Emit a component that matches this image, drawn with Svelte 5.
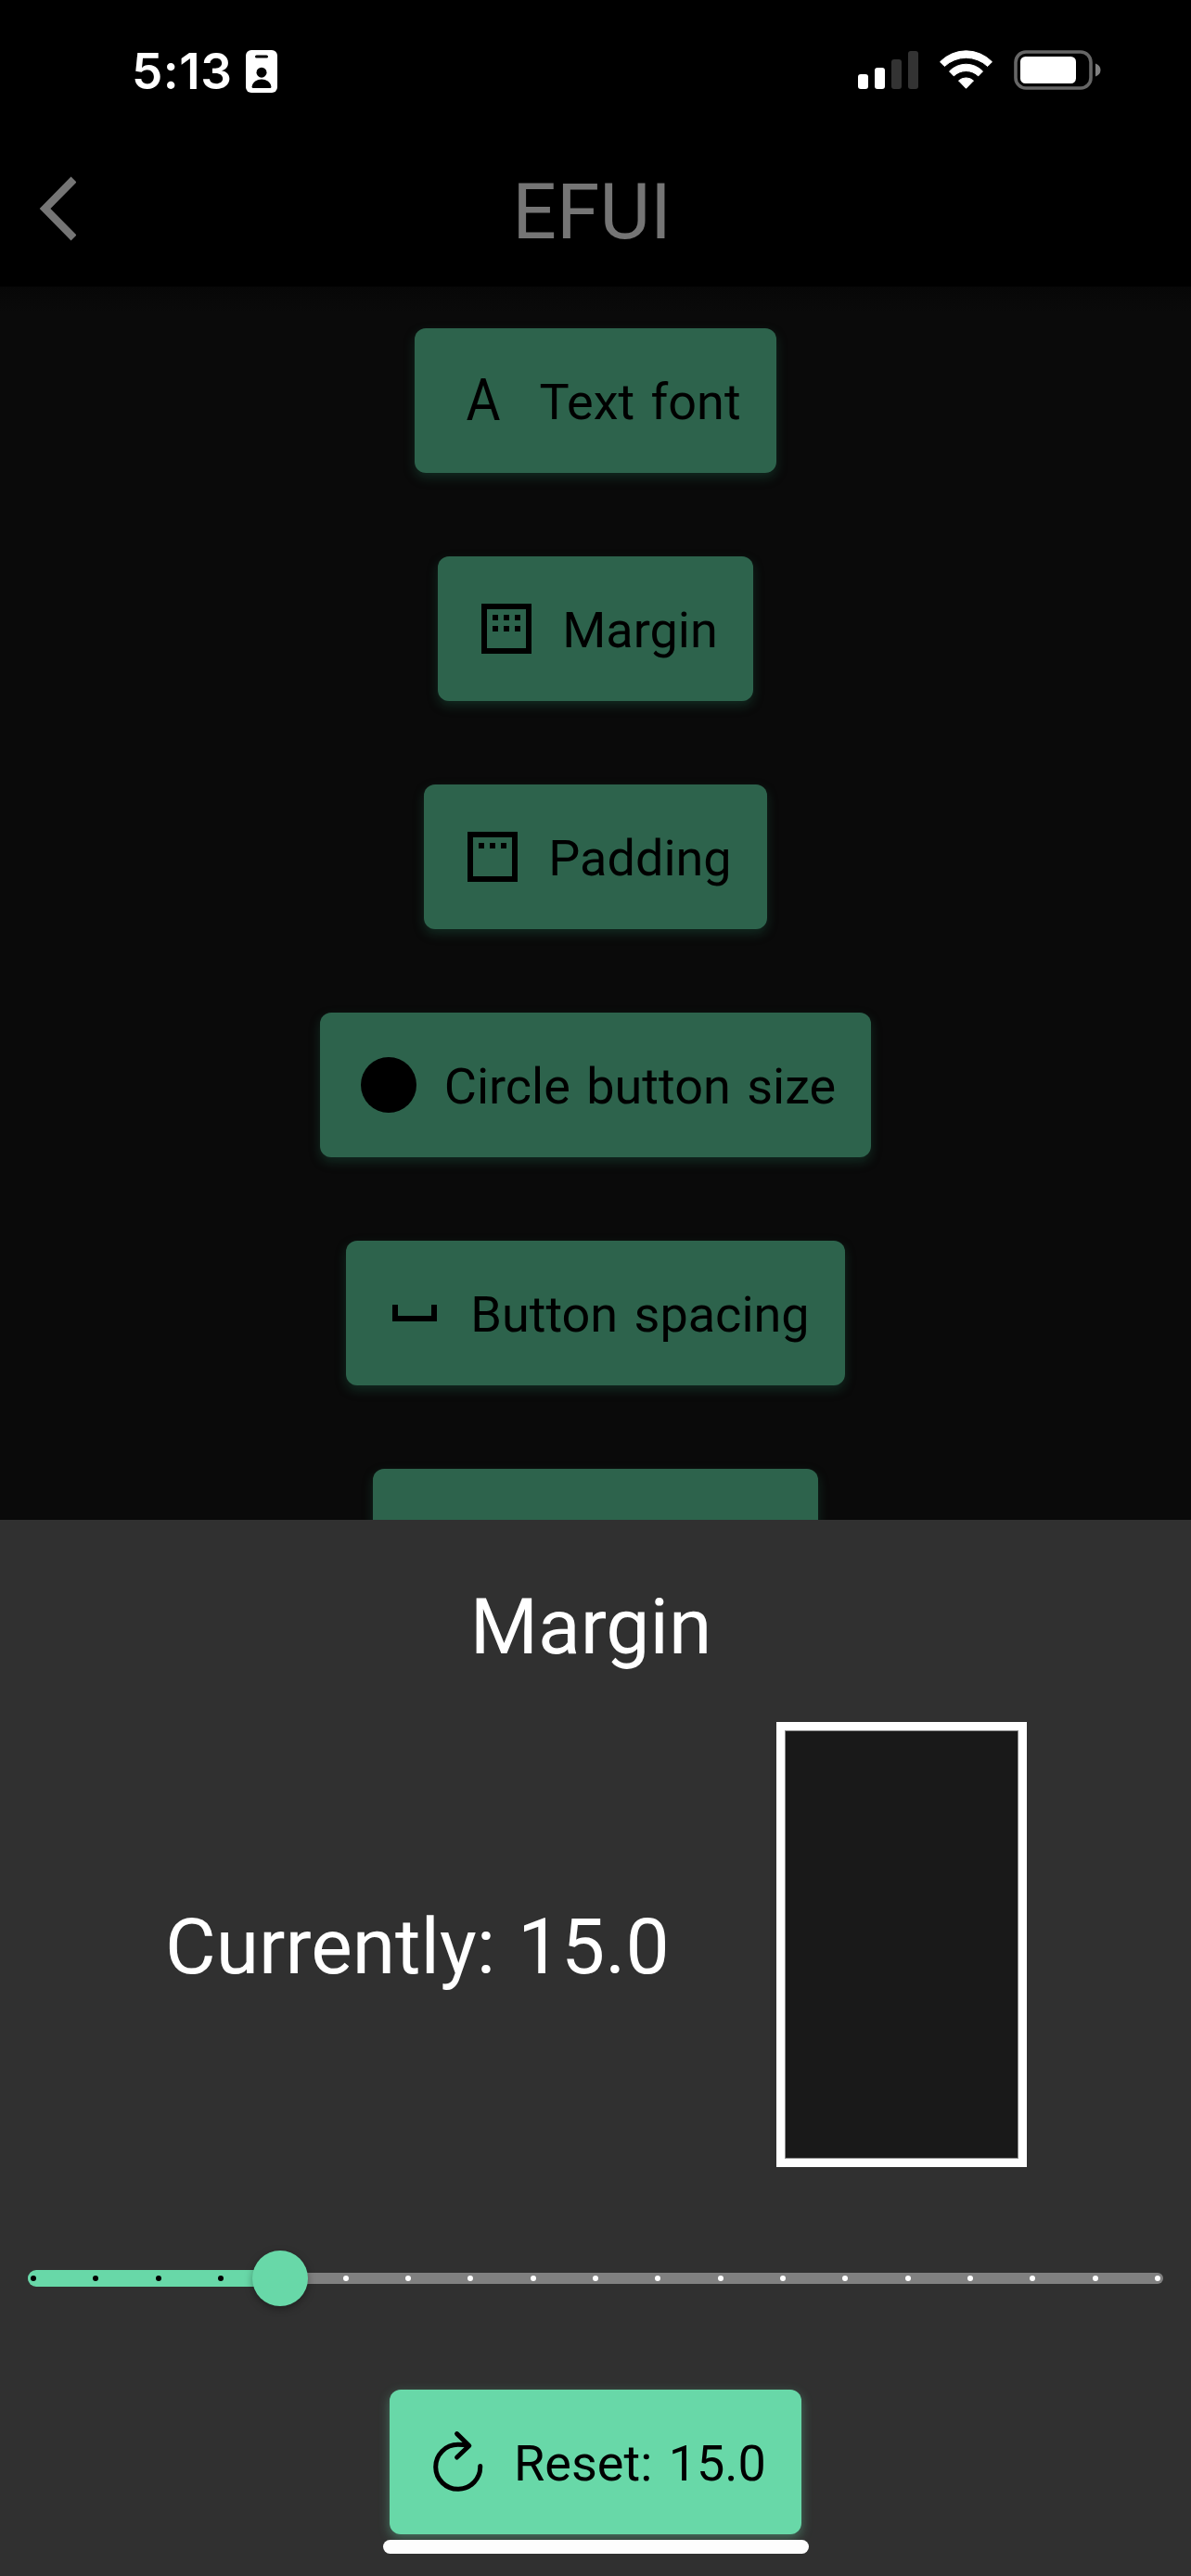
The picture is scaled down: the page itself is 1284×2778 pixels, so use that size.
<script>
  const settings = [
    { icon: 'font', label: 'Text font' },
    { icon: 'margin', label: 'Margin' },
    { icon: 'padding', label: 'Padding' },
    { icon: 'circle', label: 'Circle button size' },
    { icon: 'space', label: 'Button spacing' }
  ];
  const divisions = 18;
  const step = 4;
  const ticks = Array.from({ length: divisions + 1 }, (_, i) => i);
</script>

{#snippet glyph(name)}
  <svg class="glyph" viewBox="0 0 72 72" aria-hidden="true">
    {#if name === 'font'}
      <text class="letter" x="36" y="57" text-anchor="middle" textLength="37" lengthAdjust="spacingAndGlyphs">A</text>
    {:else if name === 'margin' || name === 'padding'}
      <rect x="12" y="12" width="48" height="48" fill="none" stroke="#000" stroke-width="6" />
      <path d="M21 21h6v6h-6zM33 21h6v6h-6zM45 21h6v6h-6z" />
      {#if name === 'margin'}
        <path d="M21 33h6v6h-6zM33 33h6v6h-6zM45 33h6v6h-6z" />
      {/if}
    {:else if name === 'circle'}
      <circle cx="36" cy="36" r="30" />
    {:else if name === 'space'}
      <path d="M12 27h6v12h36V27h6v18H12z" />
    {:else if name === 'reset'}
      <g fill="none" stroke="#000" stroke-width="5" stroke-linecap="round" stroke-linejoin="round">
        <path d="M59.700 40.400A24 24 0 1 1 35.700 17.300Q42 17.300 47 18.600" />
        <path d="M34.600 5.600L47.800 18.500L34.600 31" />
      </g>
    {/if}
  </svg>
{/snippet}

<div class="screen">
  <div class="status">
    <div class="clock">
      <span>5:13</span>
      <svg width="34" height="46" viewBox="0 0 34 46" aria-hidden="true">
        <rect width="34" height="46" rx="6" fill="#fff" />
        <rect x="10" y="5.4" width="14" height="3.2" rx="1.6" />
        <circle cx="17" cy="24.2" r="5.5" />
        <path d="M8 41Q6.4 41 6.6 39.4C7.4 34.500 12 31.600 17 31.600S26.600 34.500 27.400 39.400Q27.600 41 26 41z" />
      </svg>
    </div>
    <div class="signals">
      <svg width="65" height="42" viewBox="0 0 65 42" aria-hidden="true">
        <g fill="#fff">
          <rect y="26" width="11" height="16" rx="3" />
          <rect x="18" y="19" width="11" height="23" rx="3" />
        </g>
        <g fill="#333">
          <rect x="36" y="10" width="11" height="32" rx="3" />
          <rect x="54" y="1" width="11" height="41" rx="3" />
        </g>
      </svg>
      <svg width="57" height="42" viewBox="0 0 57 42" aria-hidden="true">
        <g fill="#fff" stroke="#fff" stroke-width="1" stroke-linejoin="round">
          <path d="M.5 12.700A39 39 0 0 1 56.500 12.700L51.700 17.500A34 34 0 0 0 5.300 17.500z" />
          <path d="M10.500 22.900A25 25 0 0 1 46.500 22.900L41.700 27.900A19 19 0 0 0 15.300 27.900z" />
          <path d="M20.500 33A12 12 0 0 1 36.500 33L28.500 41.300z" />
        </g>
      </svg>
      <svg width="94" height="43" viewBox="0 0 94 43" aria-hidden="true">
        <rect x="2" y="2" width="81" height="39" rx="11" fill="none" stroke="#666" stroke-width="3.600" />
        <rect x="7" y="7" width="60" height="29" rx="5.500" fill="#fff" />
        <path d="M88 14.500Q93.500 16.500 93.500 21.500T88 28.500z" fill="#808080" />
      </svg>
    </div>
  </div>

  <header class="bar">
    <svg class="back" width="40" height="70" viewBox="0 0 40 70" aria-hidden="true">
      <path d="M37.500 3.500L6.500 35L37.500 66.500" fill="none" stroke="#757575" stroke-width="8.300" />
    </svg>
    <h1>EFUI</h1>
  </header>

  <main class="list">
    {#each settings as item}
      <button class="btn dim">
        {@render glyph(item.icon)}
        <span>{item.label}</span>
      </button>
    {/each}
    <div class="btn dim next"></div>
  </main>

  <section class="sheet">
    <h2>Margin</h2>
    <div class="current">
      <p>Currently: 15.0</p>
      <div class="preview"></div>
    </div>
    <div class="slider">
      <div class="track"></div>
      <div class="active"></div>
      <div class="ticks">
        {#each ticks as t}
          <i class:on={t < step}></i>
        {/each}
      </div>
      <div class="thumb"></div>
    </div>
    <button class="btn bright">
      {@render glyph('reset')}
      <span>Reset: 15.0</span>
    </button>
    <div class="home"></div>
  </section>
</div>

<style>
  :global(body) {
    background: #000;
  }
  .screen {
    width: 1284px;
    height: 2778px;
    overflow: hidden;
    display: flex;
    flex-direction: column;
    background: #0a0a0a;
    font-family: Roboto, sans-serif;
    font-weight: 400;
  }
  h1, h2, p {
    margin: 0;
    font-size: 84px;
    font-weight: 400;
    line-height: 98px;
    word-spacing: 3px;
    white-space: nowrap;
  }
  p {
    padding-top: 6px;
  }
  .status {
    flex: none;
    height: 141px;
    box-sizing: border-box;
    padding: 54px 97px 0 142px;
    display: flex;
    justify-content: space-between;
    align-items: flex-start;
    background: #000;
  }
  .clock {
    display: flex;
    gap: 15px;
    color: #fff;
    font: 600 53px/46px Inter, sans-serif;
    letter-spacing: 0.5px;
  }
  .clock span {
    width: 108px;
    white-space: nowrap;
  }
  .signals {
    display: flex;
    gap: 23px;
  }
  .bar {
    flex: none;
    height: 168px;
    display: grid;
    grid-template-columns: 42px 40px 1fr 82px;
    align-items: center;
    background: #000;
    color: #757575;
  }
  .back {
    grid-column: 2;
  }
  h1 {
    padding-top: 8px;
    text-align: center;
    text-indent: -8px;
  }
  .list {
    flex: none;
    height: 1330px;
    box-sizing: border-box;
    padding-top: 45px;
    overflow: hidden;
    display: flex;
    flex-direction: column;
    align-items: center;
    gap: 90px;
    background: linear-gradient(#070707, #0a0a0a 28px);
  }
  .btn {
    flex: none;
    height: 156px;
    padding: 0 38px;
    border: 0;
    border-radius: 12px;
    display: flex;
    align-items: center;
    gap: 24px;
    color: #000;
    font: 400 54px/64px Roboto, sans-serif;
    word-spacing: 4px;
    white-space: nowrap;
  }
  .btn span {
    padding-top: 4px;
  }
  .dim {
    background: #2d634c;
    box-shadow: 0 5px 12px rgba(30, 90, 68, 0.4);
  }
  .next {
    width: 480px;
    padding: 0;
  }
  .bright {
    background: #68d8a8;
    box-shadow: 0 4px 12px rgba(104, 216, 168, 0.4);
  }
  .glyph {
    width: 72px;
    height: 72px;
    flex: none;
  }
  .letter {
    font-family: Roboto, sans-serif;
    font-size: 63px;
    font-weight: 400;
  }
  .sheet {
    flex: 1;
    display: flex;
    flex-direction: column;
    align-items: center;
    background: #303030;
    color: #fff;
  }
  h2 {
    margin: 67px 0 53px;
    text-indent: -10px;
  }
  .current {
    width: 100%;
    box-sizing: border-box;
    padding: 0 177px 0 178px;
    display: flex;
    justify-content: space-between;
    align-items: center;
  }
  .preview {
    width: 252px;
    height: 462px;
    border: 9px solid #fff;
    background: #191919;
    box-shadow: inset 0 0 0 1px #8c8c8c;
  }
  .slider {
    width: 1224px;
    height: 60px;
    margin: 90px 0;
    display: grid;
    align-items: center;
  }
  .slider > * {
    grid-area: 1 / 1;
  }
  .track {
    height: 12px;
    border-radius: 6px;
    background: #808080;
  }
  .active {
    width: 275px;
    height: 18px;
    border-radius: 9px;
    background: #68d8a8;
  }
  .ticks {
    padding: 0 3px;
    display: flex;
    justify-content: space-between;
  }
  .ticks i {
    width: 6px;
    height: 6px;
    border-radius: 50%;
    background: #fff;
  }
  .ticks .on {
    background: #000;
  }
  .thumb {
    width: 60px;
    height: 60px;
    margin-left: 242px;
    border-radius: 50%;
    background: #68d8a8;
    box-shadow: 0 3px 8px rgba(0, 0, 0, 0.35);
  }
  .home {
    position: relative;
    width: 459px;
    height: 15px;
    margin: 6px 0 0 1px;
    border-radius: 8px;
    background: #fdfdfd;
  }
</style>
